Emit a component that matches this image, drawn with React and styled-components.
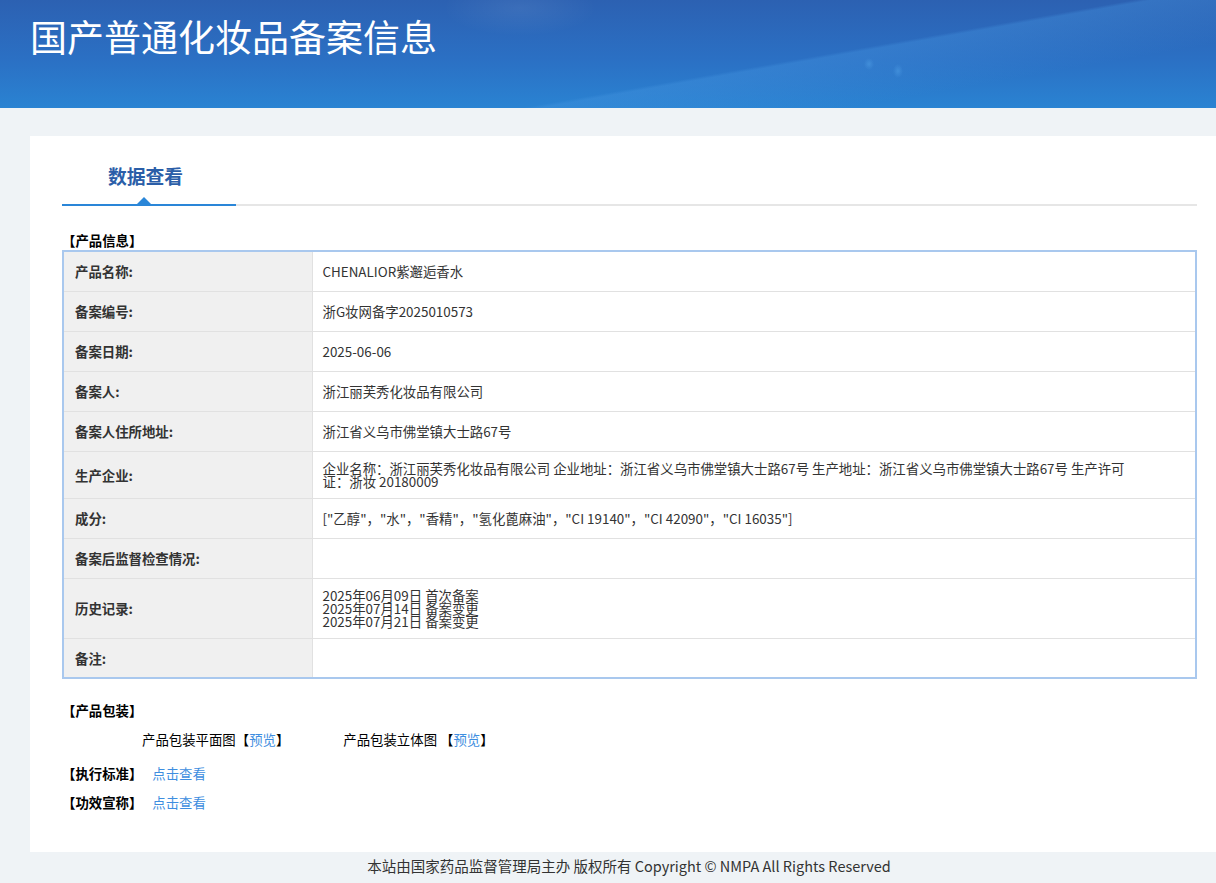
import React from "react";
import styled, { createGlobalStyle } from "styled-components";

const GlobalStyle = createGlobalStyle`
  html, body {
    margin: 0;
    padding: 0;
    background: #eff3f6;
    overflow-x: hidden;
  }
  body {
    font-family: "Noto Sans CJK SC", "Noto Sans", "Liberation Sans", sans-serif;
    color: #333;
  }
`;

const Header = styled.header`
  height: 108px;
  padding: 15px 30px 0;
  box-sizing: border-box;
  background:
    radial-gradient(ellipse 110px 40px at 520px 8px, rgba(255, 255, 255, 0.07), transparent 70%),
    radial-gradient(ellipse 5px 7px at 898px 71px, rgba(80, 160, 230, 0.5), transparent 100%),
    radial-gradient(ellipse 5px 6px at 869px 64px, rgba(80, 160, 230, 0.5), transparent 100%),
    linear-gradient(170deg, transparent 62%, rgba(70, 150, 225, 0.35) 63%, transparent 80%),
    linear-gradient(180deg, #2c61b2 0%, #2b70c4 55%, #2a83d2 100%);
`;

const Title = styled.h1`
  margin: 0;
  font-size: 37px;
  line-height: 42px;
  font-weight: 400;
  color: #fff;
`;

const Main = styled.main`
  padding: 28px 0 0 30px;
`;

const Card = styled.section`
  width: 1198px;
  background: #fff;
  padding: 18px 31px 42px 32px;
  box-sizing: border-box;
`;

const TabBar = styled.div`
  display: flex;
  border-bottom: 2px solid #e6e6e6;
  margin-bottom: 26px;
`;

const Tab = styled.div`
  position: relative;
  width: 174px;
  height: 52px;
  box-sizing: border-box;
  padding-right: 7px;
  text-align: center;
  font-size: 18.8px;
  line-height: 44px;
  font-weight: 700;
  color: ${(p) => (p.active ? "#2b5ea8" : "#666")};
  margin-bottom: -2px;
  border-bottom: 2px solid ${(p) => (p.active ? "#2a86d8" : "transparent")};

  &::after {
    content: "";
    display: ${(p) => (p.active ? "block" : "none")};
    position: absolute;
    left: 50%;
    bottom: 0;
    margin-left: -12px;
    border: 7px solid transparent;
    border-bottom-color: #2a86d8;
  }
`;

const SectionTitle = styled.div`
  font-size: 13.4px;
  font-weight: 700;
  color: #000;
  line-height: 16px;
  margin: ${(p) => p.margin || "0"};
  display: flex;
  gap: 10px;
`;

const Table = styled.table`
  width: 100%;
  border-collapse: collapse;
  border: 2px solid #a9c8ee;
  font-size: 13.4px;
`;

const LabelCell = styled.th`
  width: 249px;
  height: 40px;
  box-sizing: border-box;
  background: #f0f0f0;
  text-align: left;
  font-weight: 700;
  line-height: 16px;
  color: #333;
  padding: 10px 11px;
  border-bottom: 1px solid #e1e1e1;
  border-right: 1px solid #e1e1e1;
`;

const ValueCell = styled.td`
  height: 40px;
  box-sizing: border-box;
  padding: 10px 10px;
  line-height: 13px;
  color: #333;
  border-bottom: 1px solid #e1e1e1;
  vertical-align: middle;
`;

const Line = styled.div`
  line-height: 13px;
`;

const Link = styled.a`
  color: #3e8ee0;
  text-decoration: none;
  font-weight: 400;
  cursor: pointer;
`;

const PackRow = styled.div`
  display: flex;
  gap: 54px;
  padding-left: 80px;
  font-size: 13.4px;
  color: #000;
  margin: 11px 0 16px;
`;

const Footer = styled.footer`
  width: 1198px;
  height: 28px;
  line-height: 28px;
  text-align: center;
  font-size: 14.5px;
  color: #333;
  margin-left: 30px;
`;

const rows = [
  ["产品名称:", "CHENALIOR紫邂逅香水"],
  ["备案编号:", "浙G妆网备字2025010573"],
  ["备案日期:", "2025-06-06"],
  ["备案人:", "浙江丽芙秀化妆品有限公司"],
  ["备案人住所地址:", "浙江省义乌市佛堂镇大士路67号"],
  [
    "生产企业:",
    [
      "企业名称：浙江丽芙秀化妆品有限公司 企业地址：浙江省义乌市佛堂镇大士路67号 生产地址：浙江省义乌市佛堂镇大士路67号 生产许可",
      "证：浙妆 20180009",
    ],
  ],
  ["成分:", '["乙醇"，"水"，"香精"，"氢化蓖麻油"，"CI 19140"，"CI 42090"，"CI 16035"]'],
  ["备案后监督检查情况:", ""],
  ["历史记录:", ["2025年06月09日 首次备案", "2025年07月14日 备案变更", "2025年07月21日 备案变更"]],
  ["备注:", ""],
];

export default function App() {
  return (
    <>
      <GlobalStyle />
      <Header>
        <Title>国产普通化妆品备案信息</Title>
      </Header>
      <Main>
        <Card>
          <TabBar>
            <Tab active>数据查看</Tab>
          </TabBar>
          <SectionTitle margin="0 0 2px">【产品信息】</SectionTitle>
          <Table>
            <tbody>
              {rows.map(([label, value]) => (
                <tr key={label}>
                  <LabelCell>{label}</LabelCell>
                  <ValueCell>
                    {Array.isArray(value)
                      ? value.map((l) => <Line key={l}>{l}</Line>)
                      : value}
                  </ValueCell>
                </tr>
              ))}
            </tbody>
          </Table>
          <SectionTitle margin="23px 0 0">【产品包装】</SectionTitle>
          <PackRow>
            <span>
              产品包装平面图【<Link>预览</Link>】
            </span>
            <span>
              产品包装立体图 【<Link>预览</Link>】
            </span>
          </PackRow>
          <SectionTitle margin="0 0 13px">
            【执行标准】<Link>点击查看</Link>
          </SectionTitle>
          <SectionTitle>
            【功效宣称】<Link>点击查看</Link>
          </SectionTitle>
        </Card>
      </Main>
      <Footer>本站由国家药品监督管理局主办 版权所有 Copyright © NMPA All Rights Reserved</Footer>
    </>
  );
}
